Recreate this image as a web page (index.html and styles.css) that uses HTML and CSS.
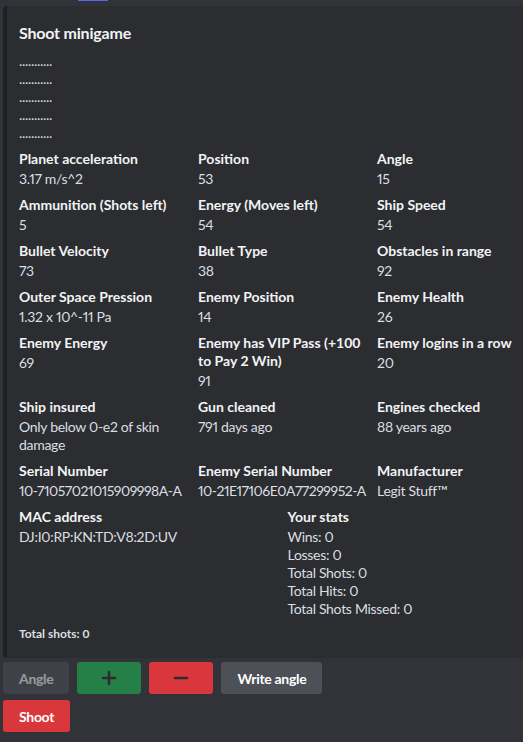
FILE: index.html
```html
<!DOCTYPE html>
<html>
<head>
<meta charset="utf-8">
<link rel="stylesheet" href="styles.css">
</head>
<body>
<div class="topbar"><span class="topbar-accent"></span></div>
<div class="message">
  <article class="embed">
    <div class="embed-title">Shoot minigame</div>
    <div class="embed-desc">
      <div>...........</div>
      <div>...........</div>
      <div>...........</div>
      <div>...........</div>
      <div>...........</div>
    </div>
    <div class="fields">
      <div class="field third"><div class="fname">Planet acceleration</div><div class="fvalue">3.17 m/s^2</div></div>
      <div class="field third"><div class="fname">Position</div><div class="fvalue">53</div></div>
      <div class="field third"><div class="fname">Angle</div><div class="fvalue">15</div></div>

      <div class="field third"><div class="fname">Ammunition (Shots left)</div><div class="fvalue">5</div></div>
      <div class="field third"><div class="fname">Energy (Moves left)</div><div class="fvalue">54</div></div>
      <div class="field third"><div class="fname">Ship Speed</div><div class="fvalue">54</div></div>

      <div class="field third"><div class="fname">Bullet Velocity</div><div class="fvalue">73</div></div>
      <div class="field third"><div class="fname">Bullet Type</div><div class="fvalue">38</div></div>
      <div class="field third"><div class="fname">Obstacles in range</div><div class="fvalue">92</div></div>

      <div class="field third"><div class="fname">Outer Space Pression</div><div class="fvalue">1.32 x 10^-11 Pa</div></div>
      <div class="field third"><div class="fname">Enemy Position</div><div class="fvalue">14</div></div>
      <div class="field third"><div class="fname">Enemy Health</div><div class="fvalue">26</div></div>

      <div class="field third"><div class="fname">Enemy Energy</div><div class="fvalue">69</div></div>
      <div class="field third"><div class="fname">Enemy has VIP Pass (+100 to Pay 2 Win)</div><div class="fvalue">91</div></div>
      <div class="field third"><div class="fname">Enemy logins in a row</div><div class="fvalue">20</div></div>

      <div class="field third"><div class="fname">Ship insured</div><div class="fvalue">Only below 0-e2 of skin damage</div></div>
      <div class="field third"><div class="fname">Gun cleaned</div><div class="fvalue">791 days ago</div></div>
      <div class="field third"><div class="fname">Engines checked</div><div class="fvalue">88 years ago</div></div>

      <div class="field third"><div class="fname">Serial Number</div><div class="fvalue serial">10-71057021015909998A-A</div></div>
      <div class="field third"><div class="fname">Enemy Serial Number</div><div class="fvalue serial">10-21E17106E0A77299952-A</div></div>
      <div class="field third"><div class="fname">Manufacturer</div><div class="fvalue">Legit Stuff™</div></div>

      <div class="field half"><div class="fname">MAC address</div><div class="fvalue">DJ:I0:RP:KN:TD:V8:2D:UV</div></div>
      <div class="field half"><div class="fname">Your stats</div>
        <div class="fvalue">
          <div>Wins: 0</div>
          <div>Losses: 0</div>
          <div>Total Shots: 0</div>
          <div>Total Hits: 0</div>
          <div>Total Shots Missed: 0</div>
        </div>
      </div>
    </div>
    <div class="embed-footer">Total shots: 0</div>
  </article>

  <div class="components">
    <div class="action-row">
      <button class="btn btn-secondary is-disabled">Angle</button>
      <button class="btn btn-success btn-icon" aria-label="plus">
        <svg width="16" height="16" viewBox="0 0 16 16"><path d="M8 2v12M2 8h12" stroke="#2b2d31" stroke-width="2.6" stroke-linecap="round" fill="none"/></svg>
      </button>
      <button class="btn btn-danger btn-icon" aria-label="minus">
        <svg width="16" height="16" viewBox="0 0 16 16"><path d="M2 8h12" stroke="#2b2d31" stroke-width="2.6" stroke-linecap="round" fill="none"/></svg>
      </button>
      <button class="btn btn-secondary">Write angle</button>
    </div>
    <div class="action-row">
      <button class="btn btn-danger">Shoot</button>
    </div>
  </div>
</div>
</body>
</html>
```
FILE: styles.css
```css
html, body {
  margin: 0;
  padding: 0;
}
body {
  background: #313338;
  width: 523px;
  height: 742px;
  overflow: hidden;
  font-family: "Lato", "Noto Sans", sans-serif;
  color: #dbdee1;
}
.topbar {
  height: 6px;
  padding-left: 78px;
}
.topbar-accent {
  display: block;
  width: 30px;
  height: 1px;
  background: #5865f2;
}
.message {
  padding-left: 3px;
}
.embed {
  background: #2b2d31;
  border-left: 4px solid #1e1f22;
  border-radius: 4px;
  padding: 8px 16px 16px 12px;
  box-sizing: border-box;
  width: 561px;
}
.embed-title {
  margin-top: 8px;
  font-size: 16px;
  line-height: 22px;
  font-weight: 700;
  color: #f2f3f5;
  letter-spacing: -0.2px;
}
.embed-desc {
  margin-top: 8px;
  font-size: 14px;
  line-height: 18px;
  letter-spacing: -0.3px;
  color: #dbdee1;
}
.fields {
  margin-top: 8px;
  display: grid;
  grid-template-columns: repeat(6, 1fr);
  gap: 8px;
  width: 529px;
}
.field.third { grid-column: span 2; }
.field.half { grid-column: span 3; }
.fname {
  font-size: 14px;
  line-height: 18px;
  font-weight: 700;
  color: #f2f3f5;
  margin-bottom: 2px;
}
.fvalue {
  font-size: 14px;
  line-height: 18px;
  font-weight: 400;
  letter-spacing: -0.3px;
  font-variant-numeric: proportional-nums;
  color: #dbdee1;
}
.serial {
  white-space: nowrap;
  letter-spacing: -0.5px;
}
.embed-footer {
  margin-top: 8px;
  font-size: 12px;
  line-height: 16px;
  font-weight: 700;
  color: #dbdee1;
}
.components {
  margin-top: 4px;
  display: flex;
  flex-direction: column;
  gap: 6px;
}
.action-row {
  display: flex;
  gap: 8px;
}
.btn {
  height: 32px;
  padding: 0 16px;
  border: 0;
  border-radius: 3px;
  font-family: "Lato", "Noto Sans", sans-serif;
  font-size: 14px;
  font-weight: 700;
  letter-spacing: -0.3px;
  color: #ffffff;
  display: flex;
  align-items: center;
  justify-content: center;
}
.btn-icon { padding: 0 24px; }
.btn-secondary { background: #4e5058; }
.btn-success { background: #248046; }
.btn-danger { background: #da373c; }
.is-disabled { opacity: 0.5; }
```
